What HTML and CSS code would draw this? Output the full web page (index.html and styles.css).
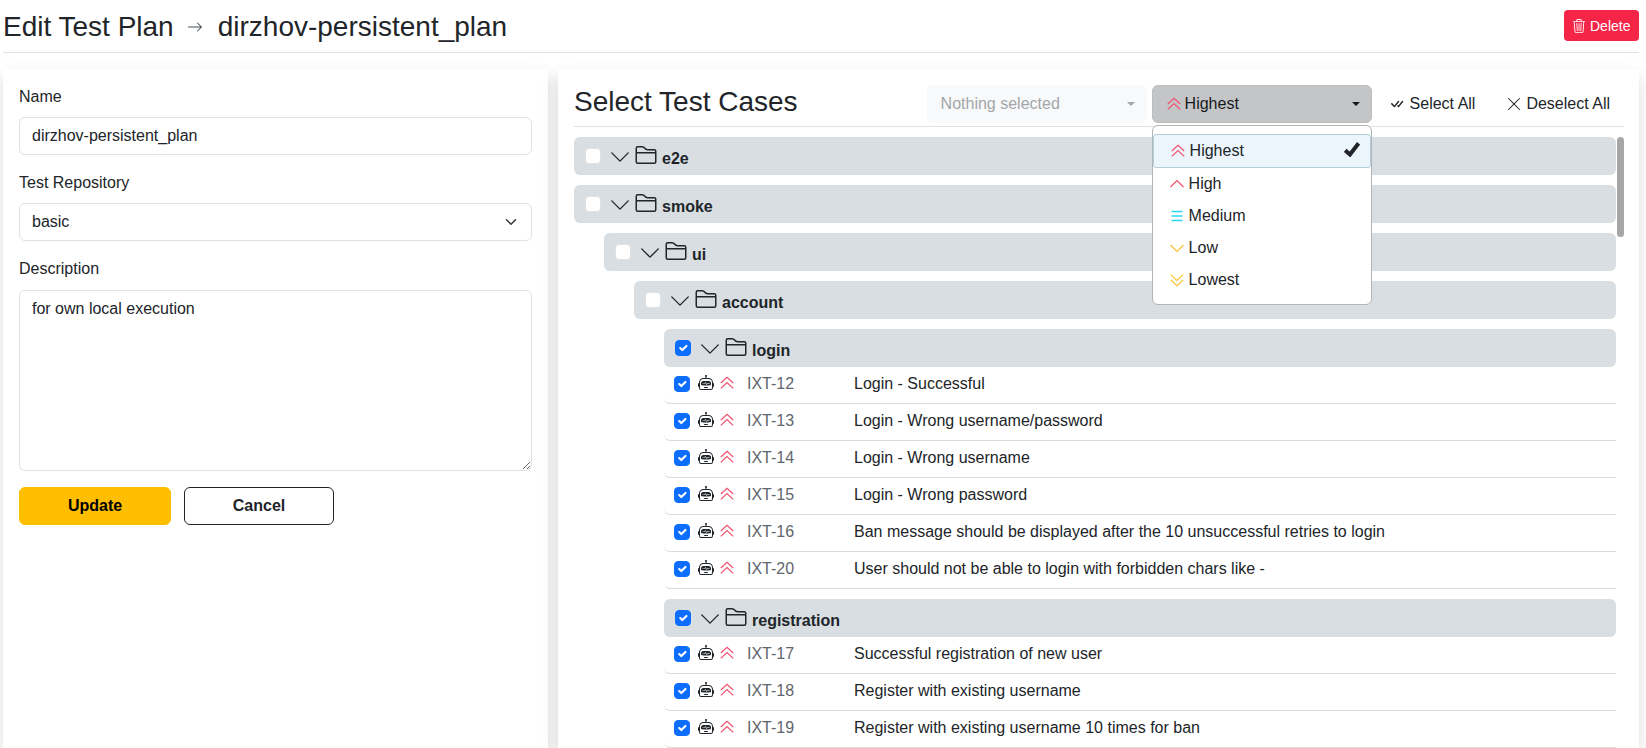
FILE: index.html

```html
<!DOCTYPE html>
<html lang="en">
<head>
  <meta charset="UTF-8">
  <title>Edit Test Plan</title>
  <link rel="stylesheet" href="styles.css">
</head>
<body>

  <!-- icon sprite -->
  <svg class="sprite" xmlns="http://www.w3.org/2000/svg">
    <symbol id="i-arrow" viewBox="0 0 16 16"><path fill="currentColor" fill-rule="evenodd" d="M1 8a.5.5 0 0 1 .5-.5h11.793l-3.147-3.146a.5.5 0 0 1 .708-.708l4 4a.5.5 0 0 1 0 .708l-4 4a.5.5 0 0 1-.708-.708L13.293 8.5H1.5A.5.5 0 0 1 1 8z"/></symbol>
    <symbol id="i-trash" viewBox="0 0 16 16"><path fill="currentColor" d="M6.5 1h3a.5.5 0 0 1 .5.5v1H6v-1a.5.5 0 0 1 .5-.5ZM11 2.5v-1A1.5 1.5 0 0 0 9.5 0h-3A1.5 1.5 0 0 0 5 1.5v1H2.506a.58.58 0 0 0-.01 0H1.5a.5.5 0 0 0 0 1h.538l.853 10.66A2 2 0 0 0 4.885 16h6.23a2 2 0 0 0 1.994-1.84l.853-10.66h.538a.5.5 0 0 0 0-1h-.995a.59.59 0 0 0-.01 0H11Zm1.958 1-.846 10.58a1 1 0 0 1-.997.92h-6.23a1 1 0 0 1-.997-.92L3.042 3.5h9.916Zm-7.487 1a.5.5 0 0 1 .528.47l.5 8.5a.5.5 0 0 1-.998.06L5 5.03a.5.5 0 0 1 .47-.53Zm5.058 0a.5.5 0 0 1 .47.53l-.5 8.5a.5.5 0 1 1-.998-.06l.5-8.5a.5.5 0 0 1 .528-.47ZM8 4.5a.5.5 0 0 1 .5.5v8.5a.5.5 0 0 1-1 0V5a.5.5 0 0 1 .5-.5Z"/></symbol>
    <symbol id="i-chevron" viewBox="0 0 16 16"><path fill="currentColor" fill-rule="evenodd" d="M1.646 4.646a.5.5 0 0 1 .708 0L8 10.293l5.646-5.647a.5.5 0 0 1 .708.708l-6 6a.5.5 0 0 1-.708 0l-6-6a.5.5 0 0 1 0-.708z"/></symbol>
    <symbol id="i-folder" viewBox="0 0 16 16"><path fill="currentColor" d="M1 3.5A1.5 1.5 0 0 1 2.5 2h2.764c.958 0 1.76.56 2.311 1.184C7.985 3.648 8.48 4 9 4h4.5A1.5 1.5 0 0 1 15 5.5v7a1.5 1.5 0 0 1-1.5 1.5h-11A1.5 1.5 0 0 1 1 12.5v-9zM2.5 3a.5.5 0 0 0-.5.5V6h12v-.5a.5.5 0 0 0-.5-.5H9c-.964 0-1.71-.629-2.174-1.154C6.374 3.334 5.82 3 5.264 3H2.5zM14 7H2v5.5a.5.5 0 0 0 .5.5h11a.5.5 0 0 0 .5-.5V7z"/></symbol>
    <symbol id="i-robot" viewBox="0 0 16 16"><path fill="currentColor" d="M6 12.5a.5.5 0 0 1 .5-.5h3a.5.5 0 0 1 0 1h-3a.5.5 0 0 1-.5-.5ZM3 8.062C3 6.76 4.235 5.765 5.53 5.886a26.58 26.58 0 0 0 4.94 0C11.765 5.765 13 6.76 13 8.062v1.157a.933.933 0 0 1-.765.935c-.845.147-2.34.346-4.235.346-1.895 0-3.39-.2-4.235-.346A.933.933 0 0 1 3 9.219V8.062Zm4.542-.827a.25.25 0 0 0-.217.068l-.92.9a24.767 24.767 0 0 1-1.871-.183.25.25 0 0 0-.068.495c.55.076 1.232.149 2.02.193a.25.25 0 0 0 .189-.071l.754-.736.847 1.71a.25.25 0 0 0 .404.062l.932-.97a25.286 25.286 0 0 0 1.922-.188.25.25 0 0 0-.068-.495c-.538.074-1.207.145-1.98.189a.25.25 0 0 0-.166.076l-.754.785-.842-1.7a.25.25 0 0 0-.182-.135Z"/><path fill="currentColor" d="M8.5 1.866a1 1 0 1 0-1 0V3h-2A4.5 4.5 0 0 0 1 7.5V8a1 1 0 0 0-1 1v2a1 1 0 0 0 1 1v1a2 2 0 0 0 2 2h10a2 2 0 0 0 2-2v-1a1 1 0 0 0 1-1V9a1 1 0 0 0-1-1v-.5A4.5 4.5 0 0 0 10.5 3h-2V1.866ZM14 7.5V13a1 1 0 0 1-1 1H3a1 1 0 0 1-1-1V7.5A3.5 3.5 0 0 1 5.5 4h5A3.5 3.5 0 0 1 14 7.5Z"/></symbol>
    <symbol id="i-check-all" viewBox="0 0 16 16"><path fill="currentColor" d="M8.97 4.97a.75.75 0 0 1 1.07 1.05l-3.99 4.99a.75.75 0 0 1-1.08.02L2.324 8.384a.75.75 0 1 1 1.06-1.06l2.094 2.093L8.95 4.992a.252.252 0 0 1 .02-.022zm-.92 5.14.92.92a.75.75 0 0 0 1.079-.02l3.992-4.99a.75.75 0 1 0-1.091-1.028L9.477 9.417l-.485-.486-.943 1.179z"/></symbol>
    <symbol id="i-x" viewBox="0 0 16 16"><path fill="currentColor" d="M2.146 2.854a.5.5 0 1 1 .708-.708L8 7.293l5.146-5.147a.5.5 0 0 1 .708.708L8.707 8l5.147 5.146a.5.5 0 0 1-.708.708L8 8.707l-5.146 5.147a.5.5 0 0 1-.708-.708L7.293 8 2.146 2.854Z"/></symbol>
    <symbol id="i-highest" viewBox="0 0 14 14"><path fill="none" stroke="#f2506f" stroke-width="1.2" d="M.8 7 7 1.200 13.200 7M.8 12.400 7 6.600l6.200 5.800"/></symbol>
    <symbol id="i-high" viewBox="0 0 14 14"><path fill="none" stroke="#f2506f" stroke-width="1.2" d="M.5 10 7 3.500 13.500 10"/></symbol>
    <symbol id="i-medium" viewBox="0 0 14 14"><path fill="none" stroke="#2bd5f5" stroke-width="1.3" d="M1.500 2.500h11M1.500 7h11M1.500 11.500h11"/></symbol>
    <symbol id="i-low" viewBox="0 0 14 14"><path fill="none" stroke="#fcc537" stroke-width="1.2" d="M.5 4 7 10.500 13.500 4"/></symbol>
    <symbol id="i-lowest" viewBox="0 0 14 14"><path fill="none" stroke="#fcc537" stroke-width="1.2" d="M.8 1.600 7 7.400l6.200-5.800M.8 7 7 12.800 13.200 7"/></symbol>
  </svg>

  <div class="page">
    <header class="page-header">
      <h1 class="page-title">
        <span>Edit Test Plan</span>
        <svg class="title-arrow"><use href="#i-arrow"/></svg>
        <span>dirzhov-persistent_plan</span>
      </h1>
      <button class="btn-delete" type="button"><svg class="icon-14"><use href="#i-trash"/></svg>Delete</button>
    </header>

    <main class="columns">
      <form class="card card-form">
        <label class="field-label" for="name">Name</label>
        <input class="field" id="name" type="text" value="dirzhov-persistent_plan">

        <label class="field-label" for="repo">Test Repository</label>
        <select class="field field-select" id="repo">
          <option>basic</option>
        </select>

        <label class="field-label field-label-area" for="desc">Description</label>
        <textarea class="field field-area" id="desc">for own local execution</textarea>

        <div class="form-actions">
          <button class="btn btn-update" type="button">Update</button>
          <button class="btn btn-cancel" type="button">Cancel</button>
        </div>
      </form>

      <section class="card card-cases">
        <div class="cases-toolbar">
          <h2 class="cases-title">Select Test Cases</h2>
          <div class="picker picker-disabled">
            <span>Nothing selected</span><span class="caret"></span>
          </div>
          <div class="picker-wrap">
            <div class="picker picker-open">
              <svg class="prio"><use href="#i-highest"/></svg><span class="picker-value">Highest</span><span class="caret"></span>
            </div>
            <ul class="menu">
              <li class="menu-item menu-item-active"><svg class="prio"><use href="#i-highest"/></svg>Highest
                <svg class="menu-check" viewBox="0 0 16 15"><path fill="none" stroke="#212529" stroke-width="4" d="M1.200 8.300 6 12.500 14.600 1.300"/></svg>
              </li>
              <li class="menu-item"><svg class="prio"><use href="#i-high"/></svg>High</li>
              <li class="menu-item"><svg class="prio"><use href="#i-medium"/></svg>Medium</li>
              <li class="menu-item"><svg class="prio"><use href="#i-low"/></svg>Low</li>
              <li class="menu-item"><svg class="prio"><use href="#i-lowest"/></svg>Lowest</li>
            </ul>
          </div>
          <button class="btn-link btn-select" type="button"><svg class="icon-16"><use href="#i-check-all"/></svg>Select All</button>
          <button class="btn-link btn-deselect" type="button"><svg class="icon-16"><use href="#i-x"/></svg>Deselect All</button>
        </div>

        <div class="tree">
          <div class="scroll-thumb"></div>

          <div class="folder">
            <div class="folder-head">
              <input class="check" type="checkbox">
              <svg class="folder-chevron"><use href="#i-chevron"/></svg>
              <svg class="folder-icon"><use href="#i-folder"/></svg>
              <span>e2e</span>
            </div>
          </div>

          <div class="folder">
            <div class="folder-head">
              <input class="check" type="checkbox">
              <svg class="folder-chevron"><use href="#i-chevron"/></svg>
              <svg class="folder-icon"><use href="#i-folder"/></svg>
              <span>smoke</span>
            </div>

            <div class="folder folder-nested">
              <div class="folder-head">
                <input class="check" type="checkbox">
                <svg class="folder-chevron"><use href="#i-chevron"/></svg>
                <svg class="folder-icon"><use href="#i-folder"/></svg>
                <span>ui</span>
              </div>

              <div class="folder folder-nested">
                <div class="folder-head">
                  <input class="check" type="checkbox">
                  <svg class="folder-chevron"><use href="#i-chevron"/></svg>
                  <svg class="folder-icon"><use href="#i-folder"/></svg>
                  <span>account</span>
                </div>

                <div class="folder folder-nested">
                  <div class="folder-head">
                    <input class="check" type="checkbox" checked>
                    <svg class="folder-chevron"><use href="#i-chevron"/></svg>
                    <svg class="folder-icon"><use href="#i-folder"/></svg>
                    <span>login</span>
                  </div>
                  <div class="case">
                    <input class="check" type="checkbox" checked>
                    <svg class="icon-16"><use href="#i-robot"/></svg>
                    <svg class="prio"><use href="#i-highest"/></svg>
                    <span class="case-id">IXT-12</span>
                    <span>Login - Successful</span>
                  </div>
                  <div class="case">
                    <input class="check" type="checkbox" checked>
                    <svg class="icon-16"><use href="#i-robot"/></svg>
                    <svg class="prio"><use href="#i-highest"/></svg>
                    <span class="case-id">IXT-13</span>
                    <span>Login - Wrong username/password</span>
                  </div>
                  <div class="case">
                    <input class="check" type="checkbox" checked>
                    <svg class="icon-16"><use href="#i-robot"/></svg>
                    <svg class="prio"><use href="#i-highest"/></svg>
                    <span class="case-id">IXT-14</span>
                    <span>Login - Wrong username</span>
                  </div>
                  <div class="case">
                    <input class="check" type="checkbox" checked>
                    <svg class="icon-16"><use href="#i-robot"/></svg>
                    <svg class="prio"><use href="#i-highest"/></svg>
                    <span class="case-id">IXT-15</span>
                    <span>Login - Wrong password</span>
                  </div>
                  <div class="case">
                    <input class="check" type="checkbox" checked>
                    <svg class="icon-16"><use href="#i-robot"/></svg>
                    <svg class="prio"><use href="#i-highest"/></svg>
                    <span class="case-id">IXT-16</span>
                    <span>Ban message should be displayed after the 10 unsuccessful retries to login</span>
                  </div>
                  <div class="case">
                    <input class="check" type="checkbox" checked>
                    <svg class="icon-16"><use href="#i-robot"/></svg>
                    <svg class="prio"><use href="#i-highest"/></svg>
                    <span class="case-id">IXT-20</span>
                    <span>User should not be able to login with forbidden chars like -</span>
                  </div>
                </div>

                <div class="folder folder-nested">
                  <div class="folder-head">
                    <input class="check" type="checkbox" checked>
                    <svg class="folder-chevron"><use href="#i-chevron"/></svg>
                    <svg class="folder-icon"><use href="#i-folder"/></svg>
                    <span>registration</span>
                  </div>
                  <div class="case">
                    <input class="check" type="checkbox" checked>
                    <svg class="icon-16"><use href="#i-robot"/></svg>
                    <svg class="prio"><use href="#i-highest"/></svg>
                    <span class="case-id">IXT-17</span>
                    <span>Successful registration of new user</span>
                  </div>
                  <div class="case">
                    <input class="check" type="checkbox" checked>
                    <svg class="icon-16"><use href="#i-robot"/></svg>
                    <svg class="prio"><use href="#i-highest"/></svg>
                    <span class="case-id">IXT-18</span>
                    <span>Register with existing username</span>
                  </div>
                  <div class="case">
                    <input class="check" type="checkbox" checked>
                    <svg class="icon-16"><use href="#i-robot"/></svg>
                    <svg class="prio"><use href="#i-highest"/></svg>
                    <span class="case-id">IXT-19</span>
                    <span>Register with existing username 10 times for ban</span>
                  </div>
                </div>
              </div>
            </div>
          </div>
        </div>
      </section>
    </main>
  </div>

</body>
</html>
```

FILE: styles.css

```css
* {
  box-sizing: border-box;
}
html, body {
  height: 100%;
  margin: 0;
  overflow: hidden;
}
body {
  font-family: "Liberation Sans", Arial, sans-serif;
  font-size: 16px;
  line-height: 24px;
  color: #212529;
  background-color: #fff;
}
.sprite {
  display: none;
}
.icon-14 {
  width: 14px;
  height: 14px;
  flex: none;
}
.icon-16 {
  width: 16px;
  height: 16px;
  flex: none;
}
.page {
  padding: 0 7px 0 3px;
}

/* header */
.page-header {
  display: flex;
  align-items: flex-start;
  justify-content: space-between;
  height: 53px;
  padding-top: 10px;
  border-bottom: 1px solid #dee2e6;
}
.page-title {
  display: flex;
  align-items: center;
  margin: 0;
  height: 34px;
  font-size: 28px;
  font-weight: 400;
  line-height: 34px;
}
.title-arrow {
  width: 16px;
  height: 16px;
  margin: 0 15px 0 13px;
  color: #495057;
}
.btn-delete {
  display: flex;
  align-items: center;
  gap: 4px;
  width: 75px;
  height: 31px;
  padding: 0 0 0 8px;
  border: none;
  border-radius: 4px;
  background-color: #f52548;
  color: #fff;
  font-family: inherit;
  font-size: 14px;
}

/* columns */
.columns {
  display: flex;
  gap: 10px;
  padding-top: 16px;
}
.card {
  height: 679px;
  background-color: #fff;
  box-shadow: 0 8px 16px rgba(0,0,0,0.15);
  overflow: hidden;
}
.card-form {
  width: 545px;
  padding: 16px;
}
.card-cases {
  width: 1081px;
  padding: 16px 15px 0 16px;
}

/* form */
.field-label {
  display: block;
  margin-bottom: 8px;
}
.field-label-area {
  margin-bottom: 9px;
}
.field {
  display: block;
  width: 100%;
  height: 38px;
  margin-bottom: 16px;
  padding: 6px 12px;
  border: 1px solid #dee2e6;
  border-radius: 6px;
  background-color: #fff;
  color: #212529;
  font-family: inherit;
  font-size: 16px;
  line-height: 24px;
}
.field-select {
  appearance: none;
  background-image: url("data:image/svg+xml,%3csvg xmlns='http://www.w3.org/2000/svg' viewBox='0 0 16 16'%3e%3cpath fill='none' stroke='%23343a40' stroke-linecap='round' stroke-linejoin='round' stroke-width='2' d='m2 5 6 6 6-6'/%3e%3c/svg%3e");
  background-repeat: no-repeat;
  background-position: right 12px center;
  background-size: 16px 12px;
}
.field-area {
  height: 181px;
}
.form-actions {
  display: flex;
  gap: 13px;
}
.btn {
  height: 38px;
  border-radius: 6px;
  font-family: inherit;
  font-size: 16px;
  font-weight: bold;
}
.btn-update {
  width: 152px;
  border: 1px solid #ffbf00;
  background-color: #ffbf00;
  color: #000;
}
.btn-cancel {
  width: 150px;
  border: 1px solid #212529;
  background-color: #fff;
  color: #212529;
}

/* toolbar */
.cases-toolbar {
  display: flex;
  align-items: flex-start;
  gap: 4px;
  height: 42px;
  border-bottom: 1px solid #dee2e6;
}
.cases-title {
  flex: 1;
  margin: 0;
  font-size: 28px;
  font-weight: 400;
  line-height: 34px;
}
.picker-wrap {
  position: relative;
}
.picker {
  display: flex;
  align-items: center;
  width: 220px;
  height: 38px;
  padding: 0 12px 0 14px;
  border-radius: 6px;
}
.picker-disabled {
  margin-right: 1px;
  background-color: #f8f9fa;
  color: #a3a6a9;
  justify-content: space-between;
}
.picker-disabled .caret {
  border-top-color: #a3a6a9;
}
.picker-open {
  padding-right: 11px;
  background-color: #c4c5c7;
  border: 1px solid #bcbdbf;
  color: #16191c;
}
.picker-open .prio {
  margin-right: 4px;
}
.picker-value {
  flex: 1;
}
.caret {
  width: 0;
  height: 0;
  border-left: 4px solid transparent;
  border-right: 4px solid transparent;
  border-top: 4px solid #16191c;
}
.prio {
  width: 14px;
  height: 14px;
  flex: none;
}

/* priority dropdown */
.menu {
  position: absolute;
  top: 40px;
  left: 0;
  z-index: 5;
  width: 220px;
  margin: 0;
  padding: 8px 0;
  list-style: none;
  background-color: #fff;
  border: 1px solid #b0b5b8;
  border-radius: 6px;
}
.menu-item {
  display: flex;
  align-items: center;
  gap: 5px;
  height: 31px;
  padding-left: 17px;
}
.menu-item + .menu-item {
  height: 32px;
}
.menu-item-active {
  position: relative;
  height: 34px;
  padding-left: 17px;
  background-color: #ebf5fb;
  border: 1px solid #b4cdd8;
  border-radius: 3px;
}
.menu-check {
  position: absolute;
  top: 7px;
  right: 10px;
  width: 16px;
  height: 15px;
}

.btn-link {
  display: flex;
  align-items: center;
  height: 38px;
  padding: 0 13px;
  border: none;
  background: none;
  color: #212529;
  font-family: inherit;
  font-size: 16px;
}
.btn-select {
  gap: 5px;
  margin-right: 1px;
}
.btn-deselect {
  gap: 4px;
  margin-right: 1px;
}

/* tree */
.tree {
  position: relative;
  padding: 10px 8px 0 0;
}
.scroll-thumb {
  position: absolute;
  top: 10px;
  right: 0;
  width: 7px;
  height: 100px;
  border-radius: 4px;
  background-color: #a6a6a6;
}
.folder {
  margin-bottom: 10px;
}
.folder-nested {
  margin-top: 10px;
  margin-left: 30px;
}
.folder-head {
  display: flex;
  align-items: center;
  height: 38px;
  padding-left: 11px;
  border-radius: 6px;
  background-color: #d8dee1;
  font-weight: bold;
}
.folder-head span {
  margin-left: 4px;
  padding-top: 6px;
}
.folder-chevron {
  width: 22px;
  height: 22px;
  margin-left: 8px;
  margin-top: 2px;
  flex: none;
}
.folder-icon {
  width: 24px;
  height: 24px;
  margin-left: 3px;
  margin-top: -2px;
  flex: none;
}
.check {
  appearance: none;
  width: 16px;
  height: 16px;
  margin: 0;
  flex: none;
  border: 1px solid #dee2e6;
  border-radius: 4px;
  background-color: #fff;
}
.check:checked {
  border-color: #0d6efd;
  background-color: #0d6efd;
  background-image: url("data:image/svg+xml,%3csvg xmlns='http://www.w3.org/2000/svg' viewBox='0 0 20 20'%3e%3cpath fill='none' stroke='%23fff' stroke-linecap='round' stroke-linejoin='round' stroke-width='3' d='m6 10 3 3 6-6'/%3e%3c/svg%3e");
  background-size: 100% 100%;
}
.case {
  display: flex;
  align-items: center;
  height: 37px;
  padding-left: 10px;
  border-bottom: 1px solid #dadada;
  border-bottom-left-radius: 6px;
}
.case span {
  padding-bottom: 2px;
}
.case .check {
  margin-bottom: 2px;
}
.case .icon-16 {
  margin-left: 8px;
  margin-bottom: 5px;
}
.case .prio {
  margin-left: 6px;
  margin-bottom: 4px;
}
.case-id {
  width: 107px;
  margin-left: 13px;
  color: #5f666d;
}
```
